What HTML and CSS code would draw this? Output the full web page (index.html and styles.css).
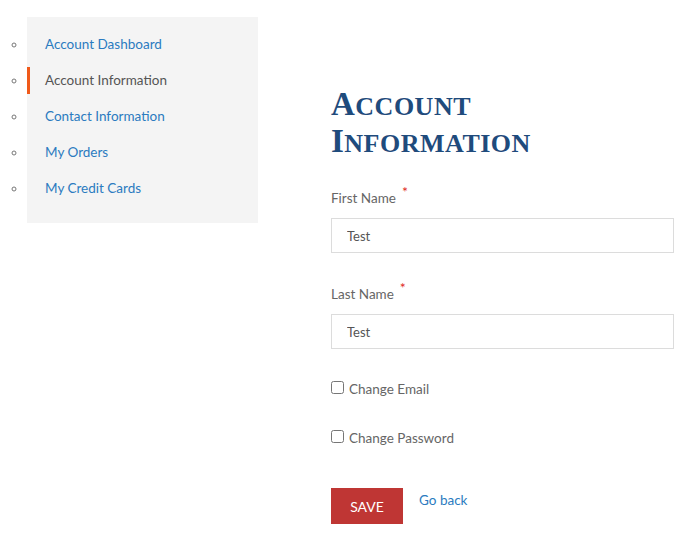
FILE: index.html
```html
<!DOCTYPE html>
<html>
<head>
<meta charset="utf-8">
<link rel="stylesheet" href="styles.css">
</head>
<body>
<div class="page">
  <ul class="side-nav">
    <li><a href="#">Account Dashboard</a></li>
    <li class="active"><a href="#">Account Information</a></li>
    <li><a href="#">Contact Information</a></li>
    <li><a href="#">My Orders</a></li>
    <li><a href="#">My Credit Cards</a></li>
  </ul>
  <main class="content">
    <h1 class="title"><span class="cap">A</span>ccount <span class="cap">I</span>nformation</h1>
    <form class="form">
      <div class="field">
        <label class="label">First Name<span class="req">*</span></label>
        <input class="input" type="text" value="Test">
      </div>
      <div class="field">
        <label class="label">Last Name<span class="req">*</span></label>
        <input class="input" type="text" value="Test">
      </div>
      <div class="checks">
        <label class="check"><input type="checkbox"> Change Email</label>
        <label class="check"><input type="checkbox"> Change Password</label>
      </div>
      <div class="actions">
        <button class="save" type="button">SAVE</button>
        <a class="back" href="#">Go back</a>
      </div>
    </form>
  </main>
</div>
</body>
</html>
```

FILE: styles.css
```css
* { box-sizing: border-box; }
body {
  margin: 0;
  background: #fff;
  font-family: Lato, "Open Sans", sans-serif;
  font-size: 13.5px;
  color: #666;
}
.page {
  display: flex;
  align-items: flex-start;
  padding-top: 17px;
}
.side-nav {
  margin: 0 0 0 27px;
  padding: 14px 0 21px;
  width: 231px;
  background: #f4f4f4;
  list-style: circle;
  color: #777;
}
.side-nav li {
  margin-bottom: 9px;
}
.side-nav li:last-child { margin-bottom: 0; }
.side-nav a {
  display: block;
  line-height: 27px;
  padding-left: 15px;
  border-left: 3px solid transparent;
  color: #2b7bc0;
  text-decoration: none;
}
.side-nav li.active a {
  border-left-color: #f05a1a;
  color: #555;
}
.content {
  margin-left: 73px;
  width: 343px;
  padding-top: 70px;
}
.title {
  margin: 0 0 27px;
  max-width: 240px;
  font-family: "Liberation Serif", serif;
  text-transform: uppercase;
  font-weight: bold;
  font-size: 26px;
  line-height: 34px;
  letter-spacing: 0.5px;
  color: #1f4b7c;
}
.title .cap { font-size: 33px; }
.field { margin-bottom: 25px; }
.field + .field { margin-top: 31px; }
.label {
  display: block;
  line-height: 20px;
  margin-bottom: 10px;
  color: #666;
}
.req {
  color: #e02b27;
  font-size: 14px;
  line-height: 0;
  vertical-align: 6px;
  margin-left: 6px;
}
.input {
  display: block;
  width: 343px;
  height: 35px;
  border: 1px solid #dcdcdc;
  padding: 0 15px;
  font-family: inherit;
  font-size: 13px;
  color: #555;
  background: #fff;
}
.checks {
  display: flex;
  flex-direction: column;
  gap: 29px;
  padding-top: 5px;
}
.check {
  display: flex;
  align-items: center;
  gap: 5px;
  line-height: 20px;
  color: #666;
}
.check input {
  margin: 0;
  width: 13px;
  height: 13px;
  position: relative;
  top: -2px;
}
.actions {
  display: flex;
  align-items: flex-start;
  gap: 16px;
  margin-top: 40px;
}
.save {
  width: 72px;
  height: 36px;
  background: #bf3634;
  color: #fff;
  border: 0;
  font-family: inherit;
  font-size: 14px;
  padding: 0;
}
.back {
  color: #2b7bc0;
  text-decoration: none;
  line-height: 24px;
}
```
